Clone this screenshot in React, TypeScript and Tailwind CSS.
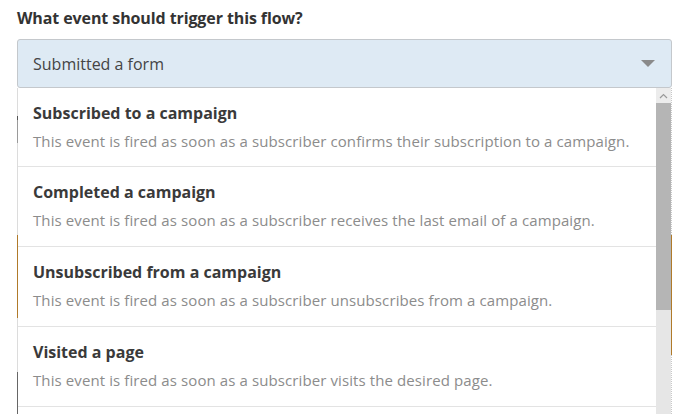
import React from "react";

const items = [
  { t: "Subscribed to a campaign", d: "This event is fired as soon as a subscriber confirms their subscription to a campaign." },
  { t: "Completed a campaign", d: "This event is fired as soon as a subscriber receives the last email of a campaign." },
  { t: "Unsubscribed from a campaign", d: "This event is fired as soon as a subscriber unsubscribes from a campaign." },
  { t: "Visited a page", d: "This event is fired as soon as a subscriber visits the desired page." },
];

export default function App() {
  return (
    <div className="w-[689px] h-[414px] overflow-hidden bg-white" style={{ fontFamily: '"Open Sans", "Liberation Sans", Arial, sans-serif' }}>
      <div className="pl-[17px] pr-[17px] pt-[8px]">
        <div className="text-[16px] font-bold text-[#333] leading-[20px] tracking-[-0.1px]">What event should trigger this flow?</div>
        <div className="mt-[11px] h-[49px] rounded-[3px] border border-[#c4c8cc] bg-[#deeaf4] flex items-center justify-between pl-[15px] pr-[16px]">
          <span className="text-[16px] text-[#444]">Submitted a form</span>
          <svg width="14" height="7" viewBox="0 0 14 7"><path d="M0 0h14L7 7z" fill="#8a8a8a" /></svg>
        </div>
        <div className="flex h-[340px] bg-white">
          <div className="w-px flex flex-col">
            <div className="h-[28px] bg-[#dcdcdc]" />
            <div className="h-[4px] bg-[#555]" />
            <div className="h-[23px] bg-[#9a9a9a]" />
            <div className="h-[92px] bg-[#dcdcdc]" />
            <div className="h-[83px] bg-[#b07a2a]" />
            <div className="h-[54px] bg-[#dcdcdc]" />
            <div className="flex-1 bg-[#666]" />
          </div>
          <div className="flex-1 flex flex-col">
            {items.map((it, i) => (
              <div key={it.t} className={`${i === 0 ? "h-[79px]" : "h-[80px]"} shrink-0 border-b border-[#e3e3e3] pl-[15px] pt-[15px]`}>
                <div className="text-[16px] font-bold text-[#3a3a3a] leading-[20px]">{it.t}</div>
                <div className="mt-[8px] text-[15px] text-[#8c8c8c] leading-[20px] tracking-[0.1px]">{it.d}</div>
              </div>
            ))}
          </div>
          <div className="w-[15px] flex flex-col bg-[#e6e6e6]">
            <div className="h-[15px] bg-[#ececec] flex items-center justify-center">
              <svg width="9" height="6" viewBox="0 0 9 6"><path d="M1 5l3.5-3.5L8 5" fill="none" stroke="#999" strokeWidth="1.2" /></svg>
            </div>
            <div className="h-[207px] bg-[#b5b5b5]" />
          </div>
          <div className="w-px flex flex-col">
            <div className="h-[147px] border-r border-dotted border-[#c8c8c8]" />
            <div className="h-[120px] bg-[#b07a2a]" />
            <div className="flex-1 border-r border-dotted border-[#c8c8c8]" />
          </div>
        </div>
      </div>
    </div>
  );
}
